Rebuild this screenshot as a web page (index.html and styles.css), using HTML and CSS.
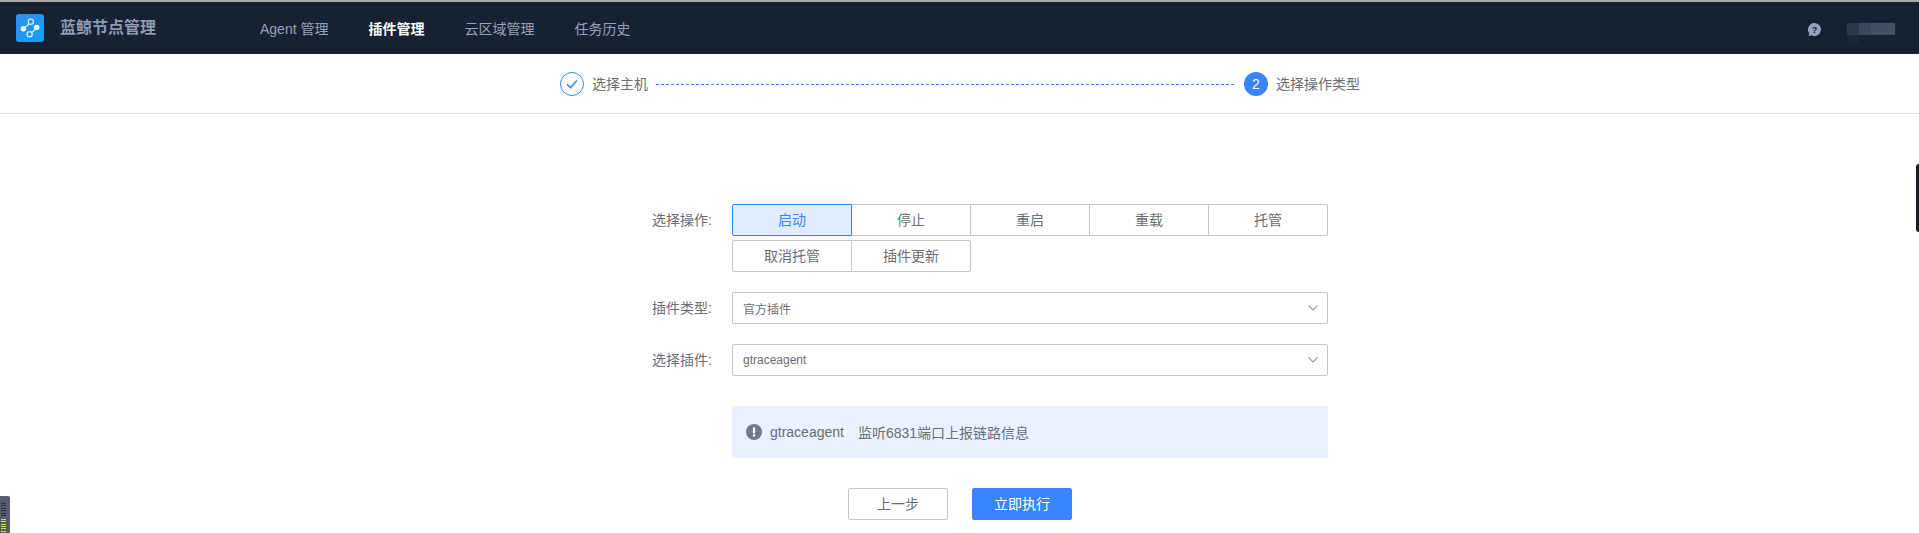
FILE: index.html
```html
<!DOCTYPE html>
<html lang="zh-CN">
<head>
<meta charset="utf-8">
<title>蓝鲸节点管理</title>
<link rel="stylesheet" href="styles.css">
</head>
<body>
<header class="topbar">
  <div class="brand">
    <svg class="logo" width="28" height="28" viewBox="0 0 28 28">
      <defs><linearGradient id="lg" x1="0" y1="0" x2="1" y2="1"><stop offset="0" stop-color="#2d8ef2"/><stop offset="1" stop-color="#12a0fb"/></linearGradient></defs>
      <rect width="28" height="28" rx="3" fill="url(#lg)"/>
      <path d="M9 13.2 L14 9.5 M19.5 15.2 L15 19" stroke="#d5ecff" stroke-width="1.3" fill="none"/>
      <circle cx="7.4" cy="14.8" r="2.7" fill="#fff"/>
      <circle cx="20.6" cy="13.4" r="2.7" fill="#fff"/>
      <circle cx="14.8" cy="7.8" r="2.6" fill="#2d8ef2" stroke="#d5ecff" stroke-width="1.3"/>
      <circle cx="13.6" cy="20.2" r="2.6" fill="#2d8ef2" stroke="#d5ecff" stroke-width="1.3"/>
    </svg>
    <span class="brand-name">蓝鲸节点管理</span>
  </div>
  <nav class="nav">
    <a class="nav-item">Agent 管理</a>
    <a class="nav-item active">插件管理</a>
    <a class="nav-item">云区域管理</a>
    <a class="nav-item">任务历史</a>
  </nav>
  <div class="top-right">
    <svg class="help" width="13" height="13" viewBox="0 0 13 13">
      <path d="M6.5 0a6.5 6.5 0 1 1-3 12.3L.6 13l.5-2.9A6.5 6.5 0 0 1 6.5 0z" fill="#96a2b9"/>
      <text x="6.5" y="9.6" text-anchor="middle" class="help-mark">?</text>
    </svg>
    <div class="user-mask">
      <div class="mask-row">
        <i class="px p1"></i><i class="px p2"></i><i class="px p3"></i><i class="px p3"></i>
      </div>
      <i class="px p0"></i>
    </div>
  </div>
</header>

<section class="steps">
  <div class="steps-inner">
    <span class="step-circle done">
      <svg width="14" height="12" viewBox="0 0 14 12"><path d="M2 6.2 L5.6 9.6 L12 2.6" fill="none" stroke="#3a84ff" stroke-width="1.5"/></svg>
    </span>
    <span class="step-label">选择主机</span>
    <span class="step-line"></span>
    <span class="step-circle current">2</span>
    <span class="step-label">选择操作类型</span>
  </div>
</section>

<main class="form">
  <div class="row row-op">
    <label class="label">选择操作:</label>
    <div class="btn-group">
      <button class="opt selected">启动</button>
      <button class="opt">停止</button>
      <button class="opt">重启</button>
      <button class="opt">重载</button>
      <button class="opt">托管</button>
      <button class="opt">取消托管</button>
      <button class="opt">插件更新</button>
    </div>
  </div>
  <div class="row row-sel">
    <label class="label">插件类型:</label>
    <div class="select">
      <span>官方插件</span>
      <svg width="12" height="8" viewBox="0 0 12 8"><path d="M1.5 1.5 L6 6 L10.5 1.5" fill="none" stroke="#979ba5" stroke-width="1.2"/></svg>
    </div>
  </div>
  <div class="row row-sel">
    <label class="label">选择插件:</label>
    <div class="select">
      <span>gtraceagent</span>
      <svg width="12" height="8" viewBox="0 0 12 8"><path d="M1.5 1.5 L6 6 L10.5 1.5" fill="none" stroke="#979ba5" stroke-width="1.2"/></svg>
    </div>
  </div>
  <div class="row row-info">
    <span class="label"></span>
    <div class="info">
      <svg width="16" height="16" viewBox="0 0 16 16"><circle cx="8" cy="8" r="8" fill="#737987"/><rect x="6.9" y="3.2" width="2.2" height="6.2" rx="1" fill="#fff"/><circle cx="8" cy="11.6" r="1.25" fill="#fff"/></svg>
      <span class="info-name">gtraceagent</span>
      <span>监听6831端口上报链路信息</span>
    </div>
  </div>
  <div class="actions">
    <button class="btn">上一步</button>
    <button class="btn primary">立即执行</button>
  </div>
</main>

<div class="float-right"></div>
<div class="float-left">
  <i class="bar"></i><i class="bar"></i><i class="bar"></i><i class="bar"></i><i class="bar"></i><i class="bar"></i>
  <i class="bar lit first-lit"></i><i class="bar lit"></i><i class="bar lit"></i><i class="bar lit"></i><i class="bar lit"></i><i class="bar lit"></i>
</div>
</body>
</html>
```
FILE: styles.css
```css
* { box-sizing: border-box; }
html, body { margin: 0; padding: 0; height: 533px; overflow: hidden; background: #fff; }
body {
  font-family: "Liberation Sans", "Noto Sans CJK SC", sans-serif;
  font-size: 14px;
  color: #6b6d76;
  border-top: 2px solid #a9a9a9;
  position: relative;
}
button { font: inherit; color: inherit; background: #fff; cursor: pointer; padding: 0; }

.topbar {
  height: 52px;
  background: #182132;
  display: flex;
  align-items: center;
  padding-left: 16px;
}
.brand { display: flex; align-items: center; width: 244px; }
.logo { display: block; flex: none; }
.brand-name { margin-left: 16px; font-size: 16px; color: #8e9ab1; font-weight: 700; line-height: 24px; }
.nav { display: flex; gap: 40px; line-height: 20px; padding-top: 1px; }
.nav-item { color: #96a2b9; }
.nav-item.active { color: #fff; font-weight: 700; }
.top-right { margin-left: auto; align-self: flex-start; display: flex; padding: 21px 24px 0 0; }
.help { display: block; }
.user-mask { margin-left: 26px; }
.help-mark { font-size: 9px; font-weight: 700; fill: #182132; font-family: "Liberation Sans", sans-serif; }
.mask-row { display: flex; }
.px { display: block; width: 12px; height: 12px; }
.p0 { background: #1c2638; height: 8px; }
.p1 { background: #2b374b; }
.p2 { background: #3a4659; }
.p3 { background: #444f62; }

.steps { height: 60px; border-bottom: 1px solid #e1e3e9; }
.steps-inner { display: flex; align-items: center; height: 59px; margin-left: 560px; width: 800px; padding-top: 1px; }
.step-circle {
  width: 24px; height: 24px; border-radius: 50%;
  display: flex; align-items: center; justify-content: center; flex: none;
}
.step-circle.done { border: 1px solid #3a84ff; }
.step-circle.current { background: #3a84ff; color: #fff; font-size: 14px; }
.step-label { margin-left: 8px; line-height: 20px; white-space: nowrap; }
.step-line { flex: 1; margin: 0 10px 0 8px; border-top: 1px dashed #3a84ff; height: 0; }

.form { margin-left: 590px; width: 738px; padding-top: 90px; }
.row { display: flex; }
.row-sel { margin-top: 20px; }
.row-info { margin-top: 30px; }
.label { width: 142px; flex: none; padding-left: 62px; line-height: 32px; white-space: nowrap; }
.btn-group { display: grid; grid-template-columns: repeat(5, 119px); grid-auto-rows: 32px; row-gap: 4px; }
.opt { position: relative; width: 120px; height: 32px; border: 1px solid #c4c6cc; border-radius: 0; line-height: 30px; }
.opt:nth-child(5n+1) { border-radius: 2px 0 0 2px; }
.opt:nth-child(5), .opt:nth-child(7) { border-radius: 0 2px 2px 0; }
.opt.selected { background: #e1ecff; border-color: #3a84ff; color: #3a84ff; z-index: 1; }
.select {
  flex: 1; height: 32px; border: 1px solid #c4c6cc; border-radius: 2px;
  display: flex; align-items: center; justify-content: space-between;
  padding: 0 8px 0 10px; font-size: 12px;
}
.info {
  flex: 1; height: 52px; background: #ebf2ff;
  display: flex; align-items: center; padding-left: 14px;
}
.info-name { margin-left: 8px; margin-right: 14px; }
.actions { display: flex; gap: 24px; margin-top: 30px; margin-left: 258px; }
.btn { width: 100px; height: 32px; border: 1px solid #c4c6cc; border-radius: 2px; line-height: 30px; }
.btn.primary { background: #3a84ff; border-color: #3a84ff; color: #fff; }

.float-right {
  position: absolute; right: 0; top: 162px; width: 3px; height: 68px;
  background: #1a1d24; border-radius: 4px 0 0 4px;
}
.float-left {
  position: absolute; left: 0; top: 494px; width: 10px; height: 37px;
  background: #575d6c; border-radius: 0 2px 0 0;
  display: flex; flex-direction: column; gap: 1.4px; padding: 7px 4px 0 1px;
  overflow: hidden;
}
.bar { display: block; height: 1px; flex: none; background: #2c303b; }
.bar.lit { background: #d4d66a; }
.first-lit { margin-top: 1.5px; }
```
